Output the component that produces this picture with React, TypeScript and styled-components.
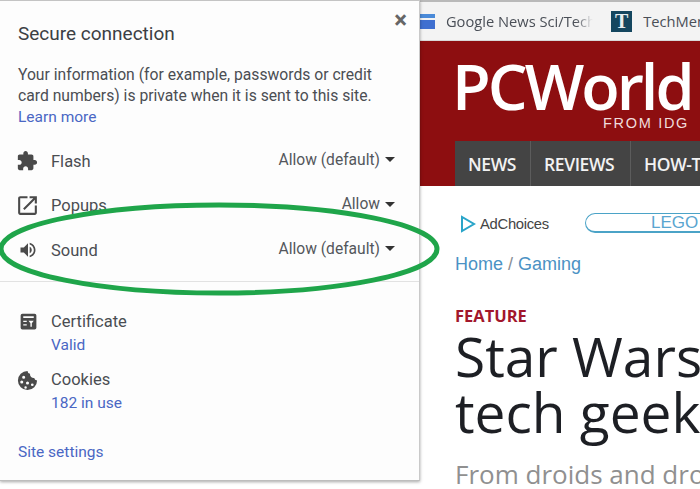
import React from 'react';
import styled, { createGlobalStyle } from 'styled-components';

const GlobalStyle = createGlobalStyle`
  html, body {
    margin: 0;
    padding: 0;
    width: 700px;
    height: 489px;
    overflow: hidden;
    background: #fff;
  }
`;

const ICONS = {
  flash: 'M20.5 11H19V7c0-1.1-.9-2-2-2h-4V3.5C13 2.12 11.88 1 10.5 1S8 2.12 8 3.5V5H4c-1.1 0-1.99.9-1.99 2v3.8H3.5c1.49 0 2.7 1.21 2.7 2.7s-1.21 2.7-2.7 2.7H2V20c0 1.1.9 2 2 2h3.8v-1.5c0-1.49 1.21-2.7 2.7-2.7 1.49 0 2.7 1.21 2.7 2.7V22H17c1.1 0 2-.9 2-2v-4h1.5c1.38 0 2.5-1.12 2.5-2.5S21.88 11 20.5 11z',
  popups: 'M19 19H5V5h7V3H5c-1.11 0-2 .9-2 2v14c0 1.1.89 2 2 2h14c1.1 0 2-.9 2-2v-7h-2v7zM14 3v2h3.59l-9.83 9.83 1.41 1.41L19 6.41V10h2V3h-7z',
  sound: 'M3 9v6h4l5 5V4L7 9H3zm13.5 3c0-1.77-1.02-3.29-2.5-4.03v8.05c1.48-.73 2.5-2.25 2.5-4.02zM14 3.23v2.06c2.89.86 5 3.54 5 6.71s-2.11 5.85-5 6.71v2.06c4.01-.91 7-4.49 7-8.77s-2.99-7.86-7-8.77z',
  certificate: 'M5 3h14a2 2 0 0 1 2 2v14a2 2 0 0 1-2 2H5a2 2 0 0 1-2-2V5a2 2 0 0 1 2-2zm1 3v2h12V6H6zm0 5v1.6h4V11H6zm0 4v1.6h4V15H6zm6-4h6l-2.2 3v4h-1.6v-4L12 11z',
  cookies: 'M12 2a10 10 0 1 0 10 10 3 3 0 0 1-3-2.6A4 4 0 0 1 14.6 5 3.4 3.4 0 0 1 12 2zM8 7a1.6 1.6 0 1 1 0 3.2A1.6 1.6 0 0 1 8 7zm-2 5a1.6 1.6 0 1 1 0 3.2A1.6 1.6 0 0 1 6 12zm6 1a1.6 1.6 0 1 1 0 3.2 1.6 1.6 0 0 1 0-3.2zm5 2a1.4 1.4 0 1 1 0 2.8 1.4 1.4 0 0 1 0-2.8zm-7 3a1.3 1.3 0 1 1 0 2.6 1.3 1.3 0 0 1 0-2.6z',
};

const Icon = ({ d, size = 22 }: { d: string; size?: number }) => (
  <svg width={size} height={size} viewBox="0 0 24 24" fill="#4a4a4a" fillRule="evenodd">
    <path d={d} />
  </svg>
);

const App: React.FC = () => (
  <>
    <GlobalStyle />
    <Screen>
      <BookmarkBar>
        <GoogleIcon />
        <Bookmark $width={148} $fade>Google News Sci/Tech</Bookmark>
        <TechIcon>T</TechIcon>
        <Bookmark $width={57}>TechMeme</Bookmark>
      </BookmarkBar>

      <Masthead>
        <Logo>PCWorld</Logo>
        <LogoSub>FROM IDG</LogoSub>
        <Nav>
          <NavItem $width={76}>NEWS</NavItem>
          <NavItem $width={100}>REVIEWS</NavItem>
          <NavItem $width={70}>HOW-TO</NavItem>
        </Nav>
      </Masthead>

      <Article>
        <AdRow>
          <AdChoices>
            <svg width="16" height="18" viewBox="0 0 16 18" fill="none" stroke="#2aa5c9" strokeWidth="2">
              <path d="M2 2v14l12-7z" />
            </svg>
            AdChoices
          </AdChoices>
          <AdPill>LEGO</AdPill>
        </AdRow>
        <Crumbs>Home <CrumbSep>/</CrumbSep> Gaming</Crumbs>
        <Kicker>FEATURE</Kicker>
        <Headline>Star Wars<br />tech geek</Headline>
        <Deck>From droids and droids</Deck>
      </Article>

      <Popup>
        <CloseButton>×</CloseButton>
        <PopupTitle>Secure connection</PopupTitle>
        <Description>
          Your information (for example, passwords or credit card numbers) is private when it is sent to this site.
          <br />
          <TextLink>Learn more</TextLink>
        </Description>

        <Permissions>
          <Permission>
            <IconSlot $shift={-2}><Icon d={ICONS.flash} /></IconSlot>
            <PermissionName>Flash</PermissionName>
            <PermissionValue>Allow (default)<Caret /></PermissionValue>
          </Permission>
          <Permission>
            <IconSlot $shift={-3}><Icon d={ICONS.popups} size={25} /></IconSlot>
            <PermissionName>Popups</PermissionName>
            <PermissionValue>Allow<Caret /></PermissionValue>
          </Permission>
          <Permission>
            <IconSlot><Icon d={ICONS.sound} size={20} /></IconSlot>
            <PermissionName>Sound</PermissionName>
            <PermissionValue>Allow (default)<Caret /></PermissionValue>
          </Permission>
        </Permissions>

        <Divider />

        <InfoRow>
          <IconSlot><Icon d={ICONS.certificate} size={21} /></IconSlot>
          <InfoText>
            <InfoName>Certificate</InfoName>
            <TextLink>Valid</TextLink>
          </InfoText>
        </InfoRow>
        <InfoRow>
          <IconSlot $shift={-2}><Icon d={ICONS.cookies} size={23} /></IconSlot>
          <InfoText>
            <InfoName>Cookies</InfoName>
            <TextLink>182 in use</TextLink>
          </InfoText>
        </InfoRow>

        <SiteSettings>Site settings</SiteSettings>
      </Popup>

      <Highlight width="700" height="489" viewBox="0 0 700 489">
        <ellipse cx="219" cy="249" rx="218" ry="44" fill="none" stroke="#1fa54a" strokeWidth="5" />
      </Highlight>
    </Screen>
  </>
);

const Screen = styled.div`
  position: relative;
  width: 700px;
  height: 489px;
  overflow: hidden;
  background: #fff;
  font-family: Roboto, "Liberation Sans", sans-serif;
`;

const BookmarkBar = styled.div`
  box-sizing: border-box;
  height: 41px;
  display: flex;
  align-items: center;
  padding-left: 419px;
  background: #f3f3f3;
  border-top: 2px solid #b9b9b9;
  border-bottom: 1px solid #d8d8d8;
`;

const GoogleIcon = styled.span`
  width: 16px;
  height: 15px;
  background: linear-gradient(180deg, #4a8ad8 0 25%, #f3f3f3 25% 40%, #3f6fd0 40% 100%);
  margin-right: 11px;
`;

const Bookmark = styled.span<{ $width: number; $fade?: boolean }>`
  width: ${({ $width }) => $width}px;
  overflow: hidden;
  white-space: nowrap;
  font-family: "Open Sans", sans-serif;
  font-size: 14.7px;
  color: #4a4f57;
  ${({ $fade }) =>
    $fade && 'mask-image: linear-gradient(90deg, #000 88%, transparent 100%);'}
`;

const TechIcon = styled.span`
  width: 21px;
  height: 21px;
  margin: 0 11px 0 18px;
  background: #14465f;
  color: #e8eef0;
  font: 700 20px/21px "Liberation Serif", serif;
  text-align: center;
`;

const Masthead = styled.div`
  box-sizing: border-box;
  height: 145px;
  padding: 11px 0 0 455px;
  background: #8d0e10;
  color: #fff;
  display: flex;
  flex-direction: column;
`;

const Logo = styled.div`
  height: 64px;
  margin-left: -3px;
  font-family: "Open Sans", sans-serif;
  font-size: 63px;
  font-weight: 600;
  line-height: 67px;
  letter-spacing: -3px;
  white-space: nowrap;
`;

const LogoSub = styled.div`
  height: 25px;
  padding-left: 148px;
  font-family: "Liberation Sans", sans-serif;
  font-size: 14.5px;
  line-height: 14px;
  letter-spacing: 1.7px;
  color: #f0dcdc;
  white-space: nowrap;
`;

const Nav = styled.div`
  display: flex;
  height: 45px;
  background: #444;
`;

const NavItem = styled.div<{ $width: number }>`
  box-sizing: border-box;
  flex: none;
  width: ${({ $width }) => $width}px;
  padding-left: 13px;
  border-right: 1px solid #5c5c5c;
  font-family: "Open Sans", sans-serif;
  font-size: 17.5px;
  font-weight: 600;
  line-height: 47px;
  letter-spacing: -0.4px;
  color: #f2f2f2;
  white-space: nowrap;
`;

const Article = styled.div`
  padding-left: 455px;
  white-space: nowrap;
`;

const AdRow = styled.div`
  display: flex;
  align-items: center;
  height: 20px;
  margin-top: 27px;
`;

const AdChoices = styled.div`
  width: 125px;
  margin-left: 5px;
  padding-top: 2px;
  display: flex;
  align-items: center;
  gap: 4px;
  flex: none;
  font-family: "Liberation Sans", sans-serif;
  font-size: 14.8px;
  letter-spacing: -0.3px;
  color: #444;
`;

const AdPill = styled.div`
  box-sizing: border-box;
  flex: none;
  width: 140px;
  height: 20px;
  border: 1px solid #4ba3c7;
  border-right: none;
  border-bottom-width: 2px;
  border-radius: 10px 0 0 10px;
  padding-left: 65px;
  font-family: "Liberation Sans", sans-serif;
  font-size: 17px;
  line-height: 18px;
  color: #5aa5d0;
`;

const Crumbs = styled.div`
  margin-top: 18px;
  height: 26px;
  font-family: "Liberation Sans", sans-serif;
  font-size: 18px;
  line-height: 26px;
  color: #4b92c4;
`;

const CrumbSep = styled.span`
  color: #8a8f95;
`;

const Kicker = styled.div`
  margin-top: 29px;
  height: 20px;
  font-family: "Open Sans", sans-serif;
  font-size: 16.5px;
  font-weight: 700;
  line-height: 20px;
  color: #a2172c;
`;

const Headline = styled.div`
  font-family: "Open Sans", sans-serif;
  font-size: 55px;
  line-height: 56px;
  color: #1d1f24;
  margin-top: 2px;
`;

const Deck = styled.div`
  margin-top: 16px;
  font-family: "Open Sans", sans-serif;
  font-size: 26px;
  line-height: 36px;
  color: #909090;
`;

const Popup = styled.div`
  position: absolute;
  left: 0;
  top: 0;
  box-sizing: border-box;
  width: 420px;
  height: 481px;
  padding: 18px 24px 0 18px;
  background: #fdfdfd;
  border-top: 1px solid #c4c4c4;
  border-right: 1px solid #c9c9c9;
  border-bottom: 1px solid #bdbdbd;
  box-shadow: 0 1px 3px rgba(0, 0, 0, 0.35);
  color: #44474c;
`;

const CloseButton = styled.div`
  position: absolute;
  top: 7px;
  right: 12px;
  font-size: 24px;
  font-weight: 700;
  line-height: 24px;
  color: #666;
`;

const PopupTitle = styled.div`
  height: 31px;
  font-size: 19px;
  line-height: 30px;
  color: #3c3f44;
`;

const Description = styled.div`
  margin-top: 14px;
  font-size: 15.7px;
  line-height: 21px;
  color: #4b4e53;
`;

const TextLink = styled.span`
  font-size: 15.5px;
  line-height: 21px;
  color: #4a67c4;
`;

const Permissions = styled.div`
  margin-top: 11px;
  display: flex;
  flex-direction: column;
`;

const Permission = styled.div`
  display: flex;
  align-items: center;
  height: 44.5px;
`;

const IconSlot = styled.div<{ $shift?: number }>`
  width: 33px;
  flex: none;
  display: flex;
  align-items: center;
  justify-content: flex-start;
  margin-left: ${({ $shift }) => $shift ?? 0}px;
  padding-right: ${({ $shift }) => -($shift ?? 0)}px;
`;

const PermissionName = styled.div`
  flex: 1;
  font-size: 16.5px;
  color: #4a4d52;
`;

const PermissionValue = styled.div`
  display: flex;
  align-items: center;
  gap: 5px;
  font-size: 15.6px;
  margin-top: -3px;
  color: #54575c;
`;

const Caret = styled.span`
  width: 0;
  height: 0;
  border-left: 5px solid transparent;
  border-right: 5px solid transparent;
  border-top: 5px solid #333;
`;

const Divider = styled.div`
  height: 1px;
  margin: 8px -24px 29px -18px;
  background: #e2e2e2;
`;

const InfoRow = styled.div`
  display: flex;
  align-items: flex-start;
  height: 58px;
`;

const InfoText = styled.div`
  display: flex;
  flex-direction: column;
  gap: 2px;
`;

const InfoName = styled.div`
  font-size: 16.5px;
  line-height: 22px;
  color: #4a4d52;
`;

const SiteSettings = styled(TextLink)`
  display: block;
  margin-top: 15px;
`;

const Highlight = styled.svg`
  position: absolute;
  left: 0;
  top: 0;
  pointer-events: none;
`;

export default App;
